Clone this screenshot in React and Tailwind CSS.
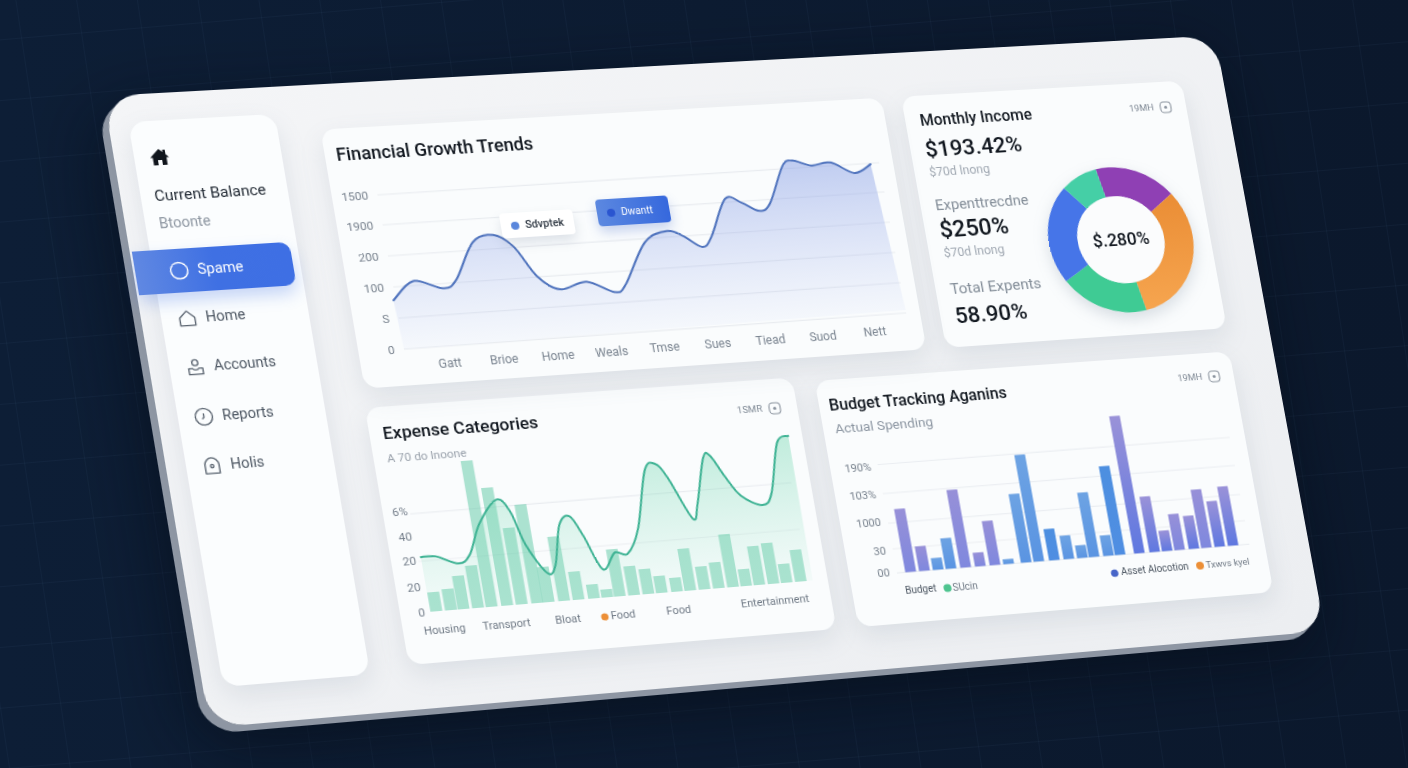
import React from 'react';

// Catmull-Rom points -> smooth bezier path
const smooth = (pts) => {
    let d = `M${pts[0][0]},${pts[0][1]}`;
    for (let i = 0; i < pts.length - 1; i++) {
        const p0 = pts[i - 1] || pts[i];
        const p1 = pts[i];
        const p2 = pts[i + 1];
        const p3 = pts[i + 2] || p2;
        const c1x = p1[0] + (p2[0] - p0[0]) / 6;
        const c1y = p1[1] + (p2[1] - p0[1]) / 6;
        const c2x = p2[0] - (p3[0] - p1[0]) / 6;
        const c2y = p2[1] - (p3[1] - p1[1]) / 6;
        d += ` C${c1x.toFixed(1)},${c1y.toFixed(1)} ${c2x.toFixed(1)},${c2y.toFixed(1)} ${p2[0].toFixed(1)},${p2[1].toFixed(1)}`;
    }
    return d;
};

const polar = (cx, cy, r, deg) => {
    const a = ((deg - 90) * Math.PI) / 180;
    return `${(cx + r * Math.cos(a)).toFixed(2)},${(cy + r * Math.sin(a)).toFixed(2)}`;
};

const ringPath = (cx, cy, inner, outer, a0, a1) => {
    const large = a1 - a0 > 180 ? 1 : 0;
    return `M${polar(cx, cy, outer, a0)} A${outer},${outer} 0 ${large} 1 ${polar(cx, cy, outer, a1)} L${polar(cx, cy, inner, a1)} A${inner},${inner} 0 ${large} 0 ${polar(cx, cy, inner, a0)} Z`;
};

const growthLine = [[42,173],[64,155],[92,164],[106,156],[128,120],[149,114],[167,127],[185,158],[205,172],[232,166],[258,178],[270,171],[296,130],[320,120],[335,126],[352,138],[363,128],[383,91],[399,96],[415,105],[427,98],[446,61],[457,56],[475,62],[495,60],[517,72],[535,64]]
    .map(([x, y]) => [x, y + (x / 535) * 3]);

const expenseLine = [[30,152],[44,152],[64,160],[76,152],[90,122],[110,99],[121,112],[130,145],[146,174],[155,166],[165,127],[176,119],[186,139],[199,173],[213,157],[225,159],[239,135],[255,78],[266,72],[276,87],[293,129],[300,115],[313,70],[320,68],[331,90],[343,110],[362,121],[373,110],[387,60],[399,54]]
    .map(([x, y]) => [x * 1.0244 - 1.7, y - 2 + Math.min(x - 30, 200) * 0.03]);

const expenseBars = [[36,19],[50,21],[62,33],[76,42],[89,145],[104,117],[118,76],[133,98],[144,35],[159,64],[173,28],[188,14],[201,8],[213,47],[227,29],[241,25],[254,17],[269,14],[282,42],[296,23],[310,26],[324,53],[337,17],[350,39],[364,41],[377,19],[391,32]];

// [x, height, gradient]
const budgetBars = [[62,64,'bv'],[76,25,'bv'],[90,12,'bs'],[103,31,'bs'],[118,79,'bv'],[133,14,'bv'],[148,45,'bv'],[162,5,'bs'],[180,70,'bs'],[193,109,'bs'],[209,32,'bb'],[224,24,'bs'],[238,13,'bs'],[250,66,'bs'],[265,21,'bs'],[277,91,'bb'],[297,141,'bi'],[313,57,'bi'],[326,21,'bi'],[339,37,'bv'],[354,34,'bi'],[367,60,'bv'],[381,47,'bi'],[395,61,'bi']];

const growthTicks = [['1500',68],['1900',98],['200',129],['100',160],['S',191],['0',222]];
const growthMonths = ['Gatt','Brioe','Home','Weals','Tmse','Sues','Tiead','Suod','Nett'];

const MetaChip = ({ label }) => (
    <div className="flex items-center gap-[6px] text-[9.5px] leading-[14px] text-[#7f8995]">
        <span>{label}</span>
        <svg width="13" height="13" viewBox="0 0 13 13" fill="none" stroke="#8a939e" strokeWidth="1.1">
            <rect x="1" y="1" width="11" height="11" rx="3.5" />
            <circle cx="6.5" cy="6.5" r="1.6" fill="#8a939e" stroke="none" />
        </svg>
    </div>
);

const GrowthChart = () => (
    <svg width="558" height="212" viewBox="0 46 558 212" className="block overflow-visible">
        <defs>
            <linearGradient id="growthFill" x1="0" y1="0" x2="0" y2="1">
                <stop offset="0" stopColor="#8ea4e6" stopOpacity="0.55" />
                <stop offset="1" stopColor="#a9b9ee" stopOpacity="0.06" />
            </linearGradient>
        </defs>
        {growthTicks.map(([t, y]) => (
            <g key={t + y}>
                <line x1="44" y1={y} x2="544" y2={y - 2} stroke="#e9ecf0" strokeWidth="1.2" />
                <text x="35" y={y} textAnchor="end" dominantBaseline="central" className="fill-[#77818d] text-[11.5px]">{t}</text>
            </g>
        ))}
        <path d={`${smooth(growthLine)} L544,217 L44,222 Z`} fill="url(#growthFill)" />
        <path d={smooth(growthLine)} fill="none" stroke="#4f73bd" strokeWidth="2" strokeLinecap="round" />
        {growthMonths.map((m, i) => (
            <text key={m} x={86 + i * 52.9} y={239 - i * 0.25} textAnchor="middle" dominantBaseline="central" className="fill-[#7b8591] text-[12px]">{m}</text>
        ))}
    </svg>
);

const ExpenseChart = () => (
    <svg width="421" height="194" viewBox="0 60 421 194" className="block overflow-visible">
        <defs>
            <linearGradient id="expenseFill" x1="0" y1="0" x2="0" y2="1">
                <stop offset="0" stopColor="#6fd6ae" stopOpacity="0.42" />
                <stop offset="1" stopColor="#8fe0c2" stopOpacity="0.06" />
            </linearGradient>
        </defs>
        <line x1="26" y1="107" x2="402" y2="105" stroke="#e9ecf0" strokeWidth="1.2" />
        <line x1="26" y1="154" x2="402" y2="152" stroke="#eef0f3" strokeWidth="1.2" />
        {expenseBars.map(([x, h]) => (
            <rect key={x} x={x * 1.0113 - 1.4 - 5.75} y={204 - h} width="11.5" height={h} fill="#5cc8a3" fillOpacity="0.5" />
        ))}
        <path d={`${smooth(expenseLine)} L406,204 L29,204 Z`} fill="url(#expenseFill)" />
        <path d={smooth(expenseLine)} fill="none" stroke="#3fb394" strokeWidth="2" strokeLinecap="round" />
        {[['6%',104],['40',129],['20',153],['20',179],['0',204]].map(([t, y]) => (
            <text key={y} x="24" y={y} textAnchor="end" dominantBaseline="central" className="fill-[#77818d] text-[11.5px]">{t}</text>
        ))}
        <g className="fill-[#6f7985] text-[10.8px]">
            <text x="40" y="223" textAnchor="middle" dominantBaseline="central">Housing</text>
            <text x="100" y="222.5" textAnchor="middle" dominantBaseline="central">Transport</text>
            <text x="160" y="223" textAnchor="middle" dominantBaseline="central">Bloat</text>
            <text x="214" y="222.5" textAnchor="middle" dominantBaseline="central">Food</text>
            <text x="269" y="222.5" textAnchor="middle" dominantBaseline="central">Food</text>
            <text x="365" y="222" textAnchor="middle" dominantBaseline="central">Entertainment</text>
        </g>
        <circle cx="196" cy="223" r="3.6" fill="#ec8f37" />
    </svg>
);

const BudgetChart = () => (
    <svg width="428" height="195" viewBox="0 54 428 195" className="block overflow-visible">
        <defs>
            <linearGradient id="bv" x1="0" y1="0" x2="0" y2="1">
                <stop offset="0" stopColor="#9790d8" />
                <stop offset="1" stopColor="#7f88de" />
            </linearGradient>
            <linearGradient id="bs" x1="0" y1="0" x2="0" y2="1">
                <stop offset="0" stopColor="#6da3e3" />
                <stop offset="1" stopColor="#5a94e2" />
            </linearGradient>
            <linearGradient id="bb" x1="0" y1="0" x2="0" y2="1">
                <stop offset="0" stopColor="#4d8fe0" />
                <stop offset="1" stopColor="#4f8ee2" />
            </linearGradient>
            <linearGradient id="bi" x1="0" y1="0" x2="0" y2="1">
                <stop offset="0" stopColor="#9a92d8" />
                <stop offset="1" stopColor="#5f78e0" />
            </linearGradient>
        </defs>
        {[[88.5,88],[118,117],[148,147],[174,174],[198.4,198.4]].map(([y1, y2]) => (
            <line key={y1} x1="48" y1={y1} x2="412" y2={y2} stroke="#ebeef2" strokeWidth="1.2" />
        ))}
        {budgetBars.map(([x, h, g]) => (
            <rect key={x} x={x - 5.5} y={198.4 - h} width="11" height={h} fill={`url(#${g})`} />
        ))}
        {[['190%',90],['103%',118],['1000',146],['30',175],['00',197]].map(([t, y]) => (
            <text key={y} x="41" y={y} textAnchor="end" dominantBaseline="central" className="fill-[#77818d] text-[11px]">{t}</text>
        ))}
        <text x="69" y="217" textAnchor="middle" dominantBaseline="central" className="fill-[#4b5561] text-[10px]">Budget</text>
        <circle cx="96" cy="217.5" r="4" fill="#4ec48f" />
        <text x="114" y="217.5" textAnchor="middle" dominantBaseline="central" className="fill-[#6f7985] text-[10px]">SUcin</text>
        <circle cx="268" cy="216.5" r="3.8" fill="#4765c8" />
        <text x="310" y="215.5" textAnchor="middle" dominantBaseline="central" className="fill-[#4b5561] text-[10px]">Asset Alocotion</text>
        <circle cx="357" cy="216" r="4" fill="#ec8f37" />
        <text x="386" y="216" textAnchor="middle" dominantBaseline="central" className="fill-[#6f7985] text-[9.5px]">Txwvs kyel</text>
    </svg>
);

const Donut = () => (
    <svg width="152" height="152" viewBox="0 0 152 152" className="block drop-shadow-[0_6px_8px_rgba(90,110,130,0.22)]">
        <defs>
            <linearGradient id="orangeFill" x1="0" y1="0" x2="0" y2="1">
                <stop offset="0" stopColor="#ea8d35" />
                <stop offset="1" stopColor="#f6a54f" />
            </linearGradient>
        </defs>
        <path d={ringPath(76, 76, 45, 75, -10, 54)} fill="#8f40b4" />
        <path d={ringPath(76, 76, 45, 75, 54, 170)} fill="url(#orangeFill)" />
        <path d={ringPath(76, 76, 45, 75, 170, 239)} fill="#3fcb94" />
        <path d={ringPath(76, 76, 45, 75, 239, 319)} fill="#4675e8" />
        <path d={ringPath(76, 76, 45, 75, 319, 350)} fill="#45cfa6" />
        <circle cx="76" cy="76" r="45" fill="#fbfcfd" />
        <text x="76" y="76" textAnchor="middle" dominantBaseline="central" className="fill-[#11171f] text-[18px] font-medium">$.280%</text>
    </svg>
);

const NavRow = ({ icon, label }) => (
    <div className="flex items-center h-[48.5px] pl-[15px] gap-[8px] text-[14px] text-[#4d5763]">
        <svg width="19" height="19" viewBox="0 0 20 20" fill="none" stroke="#5b6571" strokeWidth="1.4" strokeLinejoin="round" strokeLinecap="round">{icon}</svg>
        <span>{label}</span>
    </div>
);

const Sidebar = () => (
    <aside className="ml-[19px] mt-[27px] w-[140px] h-[555px] shrink-0 rounded-[16px] bg-[#fbfdfe] shadow-[0_10px_24px_rgba(120,135,155,0.16)]">
        <div className="h-[127px] pt-[26px] pl-[13px]">
            <svg width="20" height="20" viewBox="0 0 20 20" className="ml-[1px]" fill="#10151c">
                <path d="M10 2 1 10.500h2.500V18h4.500v-5h4v5h4.500v-7.500H19l-3-3V3h-2.500v2.200z" />
            </svg>
            <p className="mt-[18px] text-[15px] leading-[20px] text-[#252d37] whitespace-nowrap">Current Balance</p>
            <p className="mt-[8px] text-[14px] leading-[18px] text-[#8d96a1]">Btoonte</p>
        </div>
        <div className="-ml-[17px] w-[150px] h-[43px] pl-[32px] flex items-center gap-[8px] rounded-r-[10px] bg-gradient-to-r from-[#6088e2] via-[#3f70e3] to-[#3e6fe4] text-white text-[14px] shadow-[0_8px_16px_rgba(62,111,228,0.28)]">
            <svg width="19" height="19" viewBox="0 0 20 20" fill="none" stroke="#ffffff" strokeWidth="1.5"><circle cx="10" cy="10" r="8.500" /></svg>
            <span>Spame</span>
        </div>
        <div className="mt-[1px]">
            <NavRow label="Home" icon={<path d="M2.500 9.500 10 2.500l7.500 7v8h-15z" />} />
            <NavRow label="Accounts" icon={<><circle cx="10" cy="5.500" r="3" /><path d="M3 11.500h4c.6 2 5.400 2 6 0h4v6H3z" /></>} />
            <NavRow label="Reports" icon={<><circle cx="10" cy="10" r="8.500" /><path d="M10 7v3.500L8.500 12" /></>} />
            <NavRow label="Holis" icon={<><path d="M3 9c0-3.500 3.500-7 7-7s7 3.500 7 7v9H3z" /><circle cx="10" cy="10.500" r="1.600" /></>} />
        </div>
    </aside>
);

const MonthlyCard = () => (
    <section className="w-[292px] h-[258px] rounded-[14px] bg-[#fafcfd] shadow-[0_10px_24px_rgba(120,135,155,0.16)] flex">
        <div className="w-[123px] shrink-0 pl-[15px] pt-[15.5px] whitespace-nowrap">
            <p className="text-[16px] leading-[20px] font-medium text-[#141a22]">Monthly Income</p>
            <p className="mt-[5.5px] text-[22.5px] leading-[28px] font-medium text-[#11171f]">$193.42%</p>
            <p className="mt-[2px] text-[12.5px] leading-[16px] text-[#a0a8b2]">$70d lnong</p>
            <p className="mt-[16px] text-[15px] leading-[20px] text-[#838d98]">Expenttrecdne</p>
            <p className="mt-[1px] text-[23.5px] leading-[28px] font-medium text-[#11171f]">$250%</p>
            <p className="mt-[2px] text-[12.5px] leading-[16px] text-[#a0a8b2]">$70d lnong</p>
            <p className="mt-[19px] text-[15.5px] leading-[20px] text-[#838d98]">Total Expents</p>
            <p className="mt-[3px] text-[22.5px] leading-[28px] font-medium text-[#11171f]">58.90%</p>
        </div>
        <div className="flex-1 flex flex-col items-end pr-[15px] pt-[19px]">
            <MetaChip label="19MH" />
            <div className="mt-[51px] mr-[2px]">
                <Donut />
            </div>
        </div>
    </section>
);

export default function App() {
    return (
        <div className="relative w-[1408px] h-[768px] overflow-hidden bg-gradient-to-r from-[#0d1e36] to-[#0b182c] font-['Roboto',sans-serif]">
            {/* faint floor grid behind the tablet */}
            <div className="absolute left-0 top-0 w-[1800px] h-[1400px] origin-top-left [transform:matrix(1,-0.085,0.15,1,-264,-242)] bg-[linear-gradient(rgba(70,100,140,0.09)_1px,transparent_1px),linear-gradient(90deg,rgba(70,100,140,0.09)_1px,transparent_1px)] bg-[size:60px_60px]" />

            {/* flat 1114x620 panel pushed into the photographed perspective */}
            <div className="relative w-[1114px] h-[620px] origin-top-left [transform:matrix3d(1.06238,-0.05242,0,0.000053207,0.16797,1.0079,0,-0.000015068,0,0,1,0,103.5,96,0,1)] flex items-start rounded-[34px] bg-gradient-to-br from-[#f4f5f7] to-[#eceef1] shadow-[-7px_6px_0_#8e96a3,-10px_20px_70px_rgba(4,10,22,0.65)]">
                <Sidebar />

                <main className="ml-[41px] mt-[45px] w-[871px]">
                    <div className="flex gap-[20px]">
                        <section className="relative w-[558px] h-[258px] rounded-[14px] bg-[#fafcfd] shadow-[0_10px_24px_rgba(120,135,155,0.16)]">
                            <div className="h-[46px] pt-[6px] pl-[11px] flex items-center">
                                <h2 className="text-[17.8px] font-medium text-[#11171f]">Financial Growth Trends</h2>
                            </div>
                            <GrowthChart />
                            {/* chart callouts */}
                            <div className="absolute left-[158px] top-[94px] w-[72px] h-[25px] pl-[10px] flex items-center gap-[6px] rounded-[4px] bg-white shadow-[0_6px_12px_rgba(110,125,150,0.2)] text-[10.5px] font-medium text-[#2e3742]">
                                <span className="w-[8px] h-[8px] rounded-full bg-[#5a87dc]" />
                                Sdvptek
                            </div>
                            <div className="absolute left-[254px] top-[86px] w-[72px] h-[27px] pl-[10px] flex items-center gap-[6px] rounded-[4px] bg-gradient-to-r from-[#5c88e0] to-[#3668dd] shadow-[0_6px_12px_rgba(70,105,200,0.28)] text-[10px] text-white">
                                <span className="w-[8px] h-[8px] rounded-full bg-[#2a55d0]" />
                                Dwantt
                            </div>
                        </section>
                        <MonthlyCard />
                    </div>

                    <div className="mt-[19px] -ml-[3px] flex items-end gap-[22px]">
                        <section className="w-[421px] h-[254px] rounded-[14px] bg-[#fafcfd] shadow-[0_10px_24px_rgba(120,135,155,0.16)]">
                            <div className="h-[60px] pt-[14px] pl-[13px] pr-[16px] flex items-start justify-between">
                                <div>
                                    <h2 className="text-[17px] leading-[24px] font-medium text-[#11171f]">Expense Categories</h2>
                                    <p className="mt-[5px] text-[11.5px] leading-[16px] text-[#9aa2ac]">A 70 do lnoone</p>
                                </div>
                                <div className="mt-[8px]"><MetaChip label="1SMR" /></div>
                            </div>
                            <ExpenseChart />
                        </section>
                        <section className="w-[428px] h-[249px] rounded-[14px] bg-[#fafcfd] shadow-[0_10px_24px_rgba(120,135,155,0.16)]">
                            <div className="h-[54px] pt-[16px] pl-[10px] pr-[14px] flex items-start justify-between">
                                <div>
                                    <h2 className="text-[16.2px] leading-[20px] font-medium text-[#11171f]">Budget Tracking Aganins</h2>
                                    <p className="mt-[5px] pl-[2px] text-[13.7px] leading-[16px] text-[#8b95a1]">Actual Spending</p>
                                </div>
                                <div className="mt-[1px]"><MetaChip label="19MH" /></div>
                            </div>
                            <BudgetChart />
                        </section>
                    </div>
                </main>
            </div>
        </div>
    );
}
